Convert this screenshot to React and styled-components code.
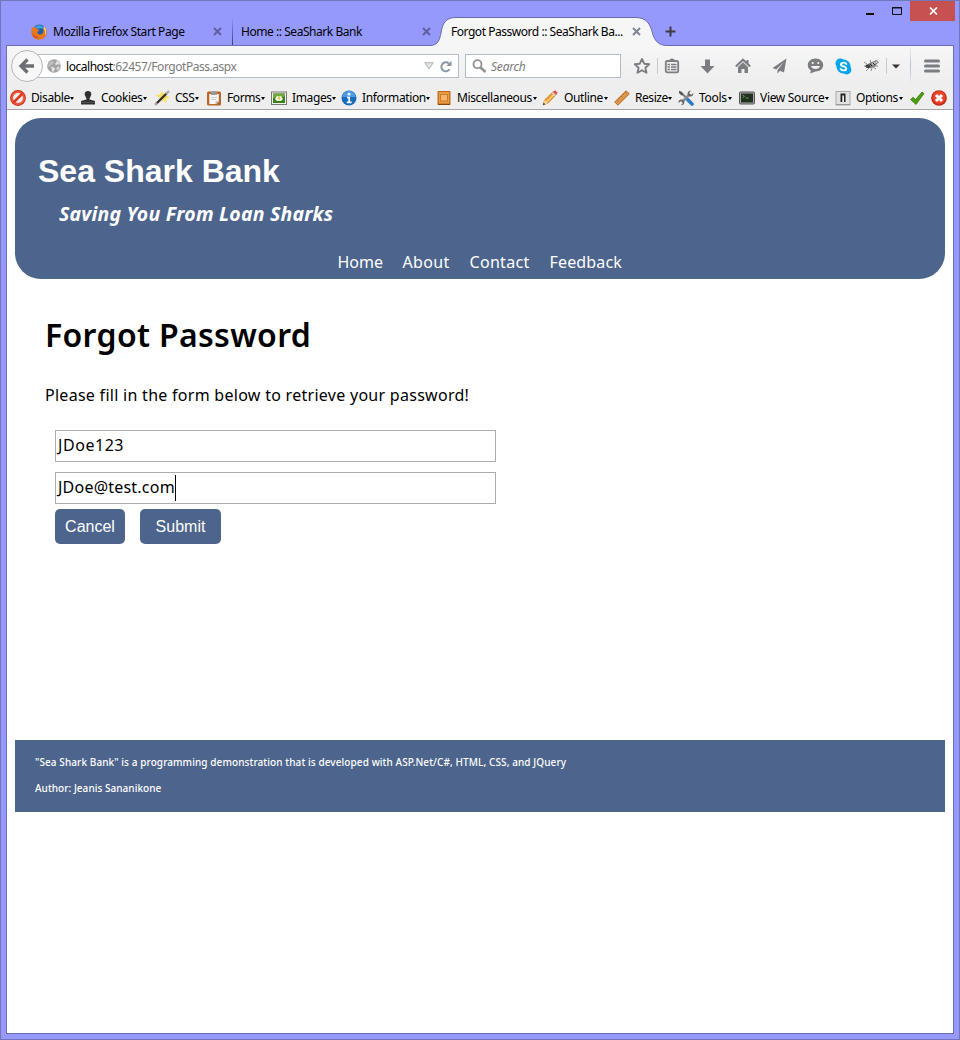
import React from 'react';
import styled, { createGlobalStyle } from 'styled-components';

const Global = createGlobalStyle`
  * { box-sizing: border-box; }
  body { margin: 0; font-family: 'Noto Sans', 'Liberation Sans', sans-serif; color: #000; }
  svg { display: block; flex: none; }
`;

const Window = styled.div`
  width: 960px; height: 1040px; display: flex; flex-direction: column;
  background: #9599fc; border: 1px solid #7376b9; overflow: hidden;
`;
const TopStrip = styled.div`
  height: 44px; flex: none; display: flex; align-items: flex-start;
`;
const Tabs = styled.div`
  display: flex; height: 29px; margin-top: 16px; padding-left: 21px;
`;
const Tab = styled.div`
  position: relative; display: flex; align-items: center; width: ${p => p.$w}px; height: 29px;
  padding: 0 ${p => p.$right || 10}px 0 ${p => p.$left}px;
  font-size: 12px; letter-spacing: ${p => p.$ls || 0}px; white-space: nowrap;
`;
const TabShape = styled.svg`
  position: absolute; left: -11px; top: 0; z-index: 1;
`;
const TabLabel = styled.span`
  position: relative; z-index: 2; flex: 1; line-height: 29px; padding-left: ${p => p.$gap || 0}px;
`;
const TabClose = styled.span`
  position: relative; z-index: 2; width: 9px;
`;
const TabDivider = styled.div`
  width: 1px; height: 28px; background: linear-gradient(#9599fc, #3c3e70);
`;
const NewTab = styled.div`
  width: 40px; height: 29px; display: flex; align-items: center; padding-left: 12px;
`;
const Controls = styled.div`
  margin-left: auto; display: flex; height: 20px; padding-right: 4px;
`;
const Control = styled.div`
  width: ${p => p.$w}px; height: 20px; display: flex; align-items: center; justify-content: center;
  background: ${p => p.$bg || 'transparent'}; padding-left: 1px;
`;
const Frame = styled.div`
  flex: 1; margin: 0 5px 5px; border: 1px solid #6a6db5; display: flex; flex-direction: column; background: #fff;
`;
const Chrome = styled.div`
  height: 64px; flex: none; background: linear-gradient(#f6f6f6, #eeeeee 60%);
  border-bottom: 1px solid #a5a5a5;
`;
const NavBar = styled.div`
  height: 40px; display: flex; align-items: center; padding-left: 4px;
`;
const BackButton = styled.div`
  width: 32px; height: 32px; border: 1px solid #b3b7bb; border-radius: 50%; background: #f7f7f7;
  display: flex; align-items: center; justify-content: center; z-index: 1;
`;
const Field = styled.div`
  height: 24px; width: ${p => p.$w}px; border: 1px solid #b2bdc9; background: #fff;
  display: flex; align-items: center; font-size: 12px; color: #7b7b7b; white-space: nowrap;
`;
const UrlField = styled(Field)`
  margin-left: -5px; padding-left: 9px; border-left: 0;
`;
const UrlText = styled.span`
  margin-left: 5px; flex: 1; letter-spacing: -0.46px;
  b { font-weight: 400; color: #000; }
`;
const SearchField = styled(Field)`
  margin-left: 6px; padding-left: 6px; font-style: italic; margin-right: 9px;
`;
const SearchText = styled.span`
  margin-left: 4px; letter-spacing: -0.2px;
`;
const Slot = styled.div`
  width: ${p => p.$w || 24}px; margin-left: ${p => p.$ml || 0}px; display: flex; justify-content: center; align-items: center;
`;
const Divider = styled.div`
  width: 1px; height: ${p => p.$h}px; margin-left: ${p => p.$ml}px;
  background: ${p => p.$bg || '#c9cacc'};
`;
const DevBar = styled.div`
  height: 23px; display: flex; align-items: center; padding: 1px 0 0 3px; font-size: 12px;
`;
const DevItem = styled.div`
  display: flex; align-items: center; width: ${p => p.$w}px; height: 22px; flex: none;
`;
const DevLabel = styled.div`
  display: flex; align-items: center; width: ${p => p.$w}px; margin-left: ${p => p.$ml}px;
  letter-spacing: ${p => p.$ls}px; line-height: 20px; white-space: nowrap;
`;
const Caret = styled.i`
  margin-left: auto; border: 2.5px solid transparent; border-top: 3px solid #000; border-bottom: 0;
`;
const Page = styled.div`
  flex: 1; padding: 8px; background: #fff; display: flex; flex-direction: column;
`;
const Banner = styled.header`
  height: 161px; border-radius: 26px; background: #4d658d; color: #fff; padding: 35px 23px 0; flex: none;
`;
const BankName = styled.h1`
  margin: 0; font: bold 32px/36px 'Liberation Sans', sans-serif;
`;
const Tagline = styled.h2`
  margin: 12px 0 0 21px; font-size: 19.5px; line-height: 26px; font-weight: 700; font-style: italic; letter-spacing: 0.2px;
`;
const Menu = styled.nav`
  display: flex; justify-content: center; gap: 20px; margin-top: 23px; font-size: 16px; line-height: 24px;
`;
const MenuLink = styled.a`
  width: ${p => p.$w}px; letter-spacing: ${p => p.$ls}px; white-space: nowrap;
`;
const Main = styled.main`
  height: 461px; padding: 32px 30px 0; flex: none;
`;
const Heading = styled.h1`
  margin: 0; font-size: 32px; line-height: 48px; font-weight: 600; letter-spacing: 0.33px;
`;
const Intro = styled.p`
  margin: 24px 0 23px; font-size: 16px; line-height: 24px; letter-spacing: 0.28px;
`;
const Form = styled.div`
  padding-left: 10px; display: flex; flex-direction: column;
`;
const Input = styled.div`
  width: 441px; height: 32px; border: 1px solid #acacac; margin-bottom: ${p => p.$mb}px;
  padding: 0 0 2px 2px; display: flex; align-items: center; font-size: 16px; letter-spacing: ${p => p.$ls}px;
`;
const TextCursor = styled.i`
  width: 1px; height: 26px; background: #000; position: relative; top: 1px;
`;
const Buttons = styled.div`
  display: flex; gap: 15px;
`;
const Button = styled.button`
  width: ${p => p.$w}px; height: 35px; border: 0; border-radius: 5px; background: #4d658d; color: #fff;
  padding: 0; font: 16px 'Liberation Sans', sans-serif;
`;
const Footer = styled.footer`
  height: 72px; background: #4d658d; color: #fff; padding: 15px 20px; font-size: 10px; line-height: 14px; flex: none; font-weight: 500;
`;
const FootLine = styled.p`
  margin: 0 0 12px; letter-spacing: ${p => p.$ls}px;
`;

const Cross = ({ color, size = 9 }) => (
  <svg width={size} height={size} viewBox="0 0 9 9"><path d="M1 1l7 7M8 1L1 8" stroke={color} strokeWidth="2" /></svg>
);
const Firefox = () => (
  <svg width="16" height="16" viewBox="0 0 16 16">
    <circle cx="8.3" cy="7.6" r="7" fill="#1d5fae" />
    <path d="M4 3C6 .5 11 .5 13 3.500C12 5 10 5 9.500 4C8 5 6 5 4 3z" fill="#3da1de" />
    <path d="M1 3.500C1.500 4 2 3.500 2.600 3C4 3.200 5.500 4 7 5.500L8.500 6.500L6.500 7.800C6 10 8 11 10 10.300C12.500 9.500 13 7 12 5C13.500 5.500 13.500 3.500 12.800 2.300C15 4 16 7 15.500 9.500C15 13 12 15.700 8 15.700C4 15.700.5 12.500.3 8.500C.2 6.500.5 5 1 3.500z" fill="#e8761b" />
    <path d="M13 2.500C15.500 4.500 15.800 8.500 14 11.500C14 8 14 6 12.500 4.500z" fill="#ffd24a" />
    <path d="M1 9C2.500 12 5 13 8 13C5 15 1.500 13 1 9z" fill="#d3371c" />
  </svg>
);
const Back = () => (
  <svg width="18" height="18" viewBox="0 0 18 18"><path d="M9.500 2.500L3 9l6.500 6.500M3.500 9H16" stroke="#6b6e72" strokeWidth="3.300" fill="none" /></svg>
);
const Globe = () => (
  <svg width="14" height="14" viewBox="0 0 14 14">
    <circle cx="7" cy="7" r="6.800" fill="#a3a3a3" />
    <path d="M1.500 4.500L3.500 2L5.500 1.200L6 3L7.500 3.800L6 5L4.500 5.500L3 7.500L1 8z" fill="#bdbdbd" />
    <path d="M9.500 1.200L12 3L13 5.500L10.500 5.200L9 6.300L8 4.800L9.500 3.500zM4 7.800L6.500 8.300L8 9.700L6.500 12.800L5 12.500L4.800 10z" fill="#e6e6e6" />
    <path d="M10 8L12.500 7.500L12.200 10L10.500 11.500L9.500 10z" fill="#dadada" />
  </svg>
);
const DropMark = () => (
  <svg width="10" height="8" viewBox="0 0 10 8"><path d="M.8.7h8.400L5 7z" fill="#dfe3e7" stroke="#b1b6bb" /></svg>
);
const Reload = () => (
  <svg width="12" height="13" viewBox="0 0 12 13"><path d="M9.600 9.300A4.500 4.500 0 1 1 8.800 3.400" fill="none" stroke="#8b98a3" strokeWidth="2" /><path d="M11.500.8V6H6.300z" fill="#8b98a3" /></svg>
);
const Magnifier = () => (
  <svg width="15" height="14" viewBox="0 0 15 14"><circle cx="5.500" cy="5.200" r="4" fill="none" stroke="#929292" strokeWidth="1.800" /><path d="M8.300 8.200L13.500 13" stroke="#929292" strokeWidth="2.600" /></svg>
);
const Star = () => (
  <svg width="18" height="18" viewBox="0 0 18 18"><path d="M9 2l2.200 4.700 5 .5-3.800 3.500 1.100 5.100L9 13.200l-4.500 2.600 1.100-5.100L1.800 7.200l5-.5z" fill="none" stroke="#7a7d82" strokeWidth="1.900" strokeLinejoin="round" /></svg>
);
const Clipboard = () => (
  <svg width="16" height="16" viewBox="0 0 16 16"><path d="M5 2L8 .3 11 2v2H5z" fill="#7a7d82" /><rect x="1.800" y="3" width="12.400" height="11.400" rx="1.500" fill="none" stroke="#7a7d82" strokeWidth="1.800" /><path d="M3.500 6.500H6M7 6.500h5.500M3.500 9H6M7 9h5.500M3.500 11.500H6M7 11.500h5.500" stroke="#7a7d82" strokeWidth="1.400" /></svg>
);
const Download = () => (
  <svg width="15" height="15" viewBox="0 0 15 15"><path d="M5 .5h5V7h4.500l-7 7.500L.5 7H5z" fill="#7a7d82" /></svg>
);
const Home = () => (
  <svg width="16" height="16" viewBox="0 0 16 16"><path d="M.8 8.500L8 1.700l7.200 6.800M12.500 2v4" fill="none" stroke="#7a7d82" strokeWidth="2" /><path d="M3 9l5-4.700L13 9v6H9.500v-4h-3v4H3z" fill="#7a7d82" /></svg>
);
const Plane = () => (
  <svg width="15" height="16" viewBox="0 0 15 16"><path d="M14.500.5L.5 10l3.700 1.500L12 4 5.500 12v3.500L8 12.800l4 1.700z" fill="#7a7d82" /></svg>
);
const Chat = () => (
  <svg width="17" height="16" viewBox="0 0 17 16"><path d="M8.500.5c4.500 0 7.700 2.900 7.700 6.600s-3.200 6.500-7.700 6.500L3 15.500l1-3C2 11.300.8 9.500.8 7.100.8 3.400 4 .5 8.500.5z" fill="#7a7d82" /><circle cx="5.700" cy="5" r="1.100" fill="#f3f3f3" /><circle cx="11.300" cy="5" r="1.100" fill="#f3f3f3" /><path d="M4 7.900h9c-.5 2-2.200 3-4.500 3S4.500 9.900 4 7.900z" fill="#f3f3f3" /></svg>
);
const Skype = () => (
  <svg width="17" height="17" viewBox="0 0 17 17"><circle cx="5.200" cy="5.200" r="4.700" fill="#00a5ea" /><circle cx="11.700" cy="11.700" r="4.700" fill="#00a5ea" /><circle cx="8.500" cy="8.500" r="7" fill="#00a5ea" /><path d="M11.300 6C10.600 4.200 6.200 4 6 6.500c-.2 2.400 5.200 1.300 5.200 3.900C11.200 13 6.500 12.900 5.600 10.800" fill="none" stroke="#fff" strokeWidth="1.900" strokeLinecap="round" /></svg>
);
const Bug = () => (
  <svg width="17" height="14" viewBox="0 0 17 14">
    <path d="M1 3l3 2M1 7l3 0M3 12l3-3M8 12l1-3M13 10l-3-2M15 7l-4 0M7 1l1 3M13 1l-3 3" stroke="#777" strokeWidth=".8" />
    <ellipse cx="9" cy="5.800" rx="4.800" ry="2.800" transform="rotate(-22 9 5.800)" fill="#888" />
    <ellipse cx="5" cy="7.300" rx="2.500" ry="2" fill="#444" /><path d="M8 4l6-2.500 1.500 2L9 7z" fill="#bbb" stroke="#666" strokeWidth=".6" /><path d="M7 5l2 2M10 4l2 2" stroke="#333" />
  </svg>
);
const MenuBars = () => (
  <svg width="16" height="14" viewBox="0 0 16 14"><path d="M1.500 2h13M1.500 7h13M1.500 12h13" stroke="#7a7d82" strokeWidth="3" strokeLinecap="round" /></svg>
);

const glyphs = {
  disable: <><circle cx="8" cy="8" r="7.900" fill="#c92a12" /><circle cx="8" cy="8" r="6" fill="none" stroke="#f0583b" strokeWidth="2" /><circle cx="8" cy="8" r="5" fill="#eee" /><path d="M3.500 12.500l9-9" stroke="#dd3c22" strokeWidth="2.600" /></>,
  cookies: <><path d="M8 1c2.200 0 3.500 1.500 3.300 3.400C11 6.500 9.500 7 9.500 9.500L15 11v3.500H1V11l5.500-1.500C6.500 7 5 6.500 4.700 4.400 4.500 2.500 5.800 1 8 1z" fill="#303030" /><path d="M1 12.500h14" stroke="#555" /></>,
  css: <><path d="M8 1l1.500 3L13 1.500 12 5l3.500 2.500L12 9l1 4-4-2.500L5 12l1-4-4.500-3L6 4.500z" fill="#f9df5c" /><path d="M1.500 14.500L13 3" stroke="#2f2f2f" strokeWidth="2.300" /><path d="M12 4l3-3M1 15l2-2" stroke="#aaa" strokeWidth="2.400" /></>,
  forms: <><rect x="1" y="1.500" width="14" height="14" rx="1.500" fill="#b7672a" /><path d="M3.300 4h9.500v7.500L10 14H3.300z" fill="#f6f6f6" /><path d="M12.800 11L9.500 14.200v-3z" fill="#bbb" /><path d="M5 5V2.500L7 1h2l2 1.500V5z" fill="#999" /><path d="M5 7.500h6M5 9.500h5" stroke="#ccc" /></>,
  images: <><rect x=".5" y="2" width="15" height="12.500" fill="#f5f5f0" stroke="#777" /><rect x="2" y="3.500" width="12" height="9.500" fill="#39811d" /><path d="M2 3.500h12v3L2 8z" fill="#73a944" /><path d="M4 9l2-3 2 .6 2-.6 2 3-2 2H6z" fill="#f7f7e7" /><circle cx="8" cy="8.300" r="1.300" fill="#e4c632" /></>,
  info: <><circle cx="8" cy="8" r="7.500" fill="#186cbd" /><path d="M1.500 7a6.500 6.200 0 0 1 13 0z" fill="#4d9be0" /><circle cx="8" cy="4.200" r="1.400" fill="#fff" /><path d="M6 7.500h2.200v5M5.800 12.300h4.800" fill="none" stroke="#fff" strokeWidth="1.700" /></>,
  misc: <><rect x="1.500" y="1" width="13" height="14" rx="1" fill="#b9681b" /><rect x="2.700" y="2" width="10.600" height="11.500" fill="#e89b42" /><rect x="4.500" y="4.500" width="7" height="6.500" fill="#f3b66a" stroke="#cc7d2b" /><path d="M2 14.500h12" stroke="#874710" /></>,
  outline: <><path d="M1 15l1.500-5L11 1.700l3.300 3L6 13.300z" fill="#ef9b32" stroke="#b96d1a" strokeWidth=".5" /><path d="M4.500 12L12.500 4" stroke="#ffd17c" strokeWidth="1.400" /><path d="M11 1.700L13 .3l2.700 2.500-1.400 1.900z" fill="#d9505b" /><path d="M10 2.700l3.300 3" stroke="#ddd" strokeWidth="1.200" /><path d="M1 15l1.500-5L6 13.300z" fill="#f1d2a0" /><path d="M1 15l.7-2.200 1.600 1.500z" fill="#222" /></>,
  resize: <><path d="M.7 12L12 .8l3.300 3L4 15.200z" fill="#dc964e" stroke="#b66e2b" /><path d="M3 10l1.500 1.500M5 8l1 1M7 6l1.500 1.500M9 4l1 1M11 2l1.500 1.500" stroke="#a5642a" strokeWidth=".7" /></>,
  tools: <><path d="M3 2.500l10 10" stroke="#777" strokeWidth="1.800" /><path d="M1 .8L4 2l1 3-1.500.5L1 3z" fill="#555" /><path d="M12 4L4 12" stroke="#8c8c8c" strokeWidth="2.500" /><path d="M13 .7L11 3l2 2 2.300-2c.3 2.500-1.500 4-4 3.300L9.500 4.500C9.300 2 11 .3 13 .7zM3 15.300L5 13l-2-2-2.300 2C0 10.500 2 9 4.500 9.700l1.800 1.800C6.700 14 5 15.600 3 15.300z" fill="#666" /><path d="M10 10l4 4" stroke="#2d7cc9" strokeWidth="3.600" strokeLinecap="round" /></>,
  source: <><rect x=".5" y="2" width="15" height="12" rx="1" fill="#aaa" stroke="#555" /><rect x="2" y="3.500" width="12" height="9" fill="#243022" /><path d="M3.500 5l2 1.300-2 1.300M6.500 8h3" fill="none" stroke="#69a75a" strokeWidth=".9" /></>,
  options: <><rect x="1" y="1.500" width="14" height="13.500" fill="#e2e2e2" stroke="#aaa" /><path d="M1 14.500h14" stroke="#999" /><rect x="5.500" y="3.500" width="5" height="8.500" fill="#222" /><rect x="7.300" y="5.500" width="1.700" height="6.500" fill="#eee" /></>,
  check: <><path d="M1.500 9.500l2.700-2.300 2.300 2.400L13 2l2 1.500-8 11z" fill="#4d9d0b" stroke="#2d7108" strokeWidth=".7" /></>,
  error: <><circle cx="8" cy="8" r="7.800" fill="#c92913" /><circle cx="8" cy="7.500" r="6.300" fill="#e8452f" /><path d="M5 5l6 6M11 5l-6 6" stroke="#fff" strokeWidth="3" /></>,
};

// Toolbar entries: icon, label, item width, label width, letter spacing, gap
const devItems = [
  ['disable', 'Disable', 70, 43, -0.4, 5],
  ['cookies', 'Cookies', 74, 46, -0.38, 5],
  ['css', 'CSS', 52, 24, -0.5, 5],
  ['forms', 'Forms', 65, 38, -0.4, 5],
  ['images', 'Images', 70, 43, -0.36, 5],
  ['info', 'Information', 95, 67, -0.36, 5],
  ['misc', 'Miscellaneous', 106, 80, -0.38, 5],
  ['outline', 'Outline', 72, 44, -0.36, 6],
  ['resize', 'Resize', 64, 37, -0.45, 5],
  ['tools', 'Tools', 61, 33, -0.3, 5],
  ['source', 'View Source', 96, 69, -0.32, 5],
  ['options', 'Options', 74, 47, -0.4, 5],
  ['check', '', 22, 0, 0, 0],
  ['error', '', 16, 0, 0, 0],
];

export default function App() {
  return (
    <Window>
      <Global />
      <TopStrip>
        <Tabs>
          <Tab $w={210} $left={9} $ls={-0.42}>
            <Firefox />
            <TabLabel $gap={6}>Mozilla Firefox Start Page</TabLabel>
            <TabClose><Cross color="#5d619e" /></TabClose>
          </Tab>
          <TabDivider />
          <Tab $w={208} $left={8} $ls={-0.45}>
            <TabLabel>Home :: SeaShark Bank</TabLabel>
            <TabClose><Cross color="#5d619e" /></TabClose>
          </Tab>
          <Tab $w={212} $left={10} $right={12} $ls={-0.46}>
            <TabShape width="240" height="30" viewBox="0 0 240 30">
              <path d="M0 28.500C8 28.500 9.500 23 11 16C12.500 7 15 .5 26 .5H205C217 .5 220 7 222.500 16C224.500 24 229 28.500 237 28.500V30H0z" fill="#f6f6f6" />
              <path d="M0 28.500C8 28.500 9.500 23 11 16C12.500 7 15 .5 26 .5H205C217 .5 220 7 222.500 16C224.500 24 229 28.500 237 28.500" fill="none" stroke="#686ba9" />
            </TabShape>
            <TabLabel>Forgot Password :: SeaShark Ba...</TabLabel>
            <TabClose><Cross color="#7d8791" /></TabClose>
          </Tab>
          <NewTab>
            <svg width="11" height="11" viewBox="0 0 11 11"><path d="M5.500.5v10M.5 5.500h10" stroke="#3c3c3c" strokeWidth="2" /></svg>
          </NewTab>
        </Tabs>
        <Controls>
          <Control $w={26}><svg width="8" height="14" viewBox="0 0 8 14"><path d="M0 10h8" stroke="#111" strokeWidth="2" /></svg></Control>
          <Control $w={28}><svg width="10" height="8" viewBox="0 0 10 8"><path d="M.5.5h9v7h-9zM0 1h10" stroke="#111" fill="none" /></svg></Control>
          <Control $w={45} $bg="#c75050"><svg width="9" height="8" viewBox="0 0 9 8"><path d="M1 .5l7 7M8 .5l-7 7" stroke="#fff" strokeWidth="1.700" /></svg></Control>
        </Controls>
      </TopStrip>
      <Frame>
        <Chrome>
          <NavBar>
            <BackButton><Back /></BackButton>
            <UrlField $w={421}>
              <Globe />
              <UrlText><b>localhost</b>:62457/ForgotPass.aspx</UrlText>
              <DropMark />
              <Slot $w={24}><Reload /></Slot>
            </UrlField>
            <SearchField $w={156}><Magnifier /><SearchText>Search</SearchText></SearchField>
            <Slot><Star /></Slot>
            <Divider $h={16} $ml={3} />
            <Slot $ml={2}><Clipboard /></Slot>
            <Slot $ml={11}><Download /></Slot>
            <Slot $ml={12}><Home /></Slot>
            <Slot $ml={12}><Plane /></Slot>
            <Slot $ml={12}><Chat /></Slot>
            <Slot $ml={4}><Skype /></Slot>
            <Slot $ml={4}><Bug /></Slot>
            <Divider $h={16} $ml={3} />
            <Slot $ml={3} $w={12}><svg width="8" height="5" viewBox="0 0 8 5"><path d="M0 .5h8L4 4.500z" fill="#333" /></svg></Slot>
            <Divider $h={38} $ml={8} $bg="linear-gradient(#eef1f5, #b4bfcc 50%, #eef1f5)" />
            <Slot $ml={9}><MenuBars /></Slot>
          </NavBar>
          <DevBar>
            {devItems.map(([icon, label, w, lw, ls, gap]) => (
              <DevItem key={icon} $w={w}>
                <svg width="16" height="16" viewBox="0 0 16 16">{glyphs[icon]}</svg>
                {label && <DevLabel $w={lw} $ml={gap} $ls={ls}>{label}<Caret /></DevLabel>}
              </DevItem>
            ))}
          </DevBar>
        </Chrome>
        <Page>
          <Banner>
            <BankName>Sea Shark Bank</BankName>
            <Tagline>Saving You From Loan Sharks</Tagline>
            <Menu>
              <MenuLink $w={45} $ls={0}>Home</MenuLink>
              <MenuLink $w={47} $ls={0.35}>About</MenuLink>
              <MenuLink $w={60} $ls={0.3}>Contact</MenuLink>
              <MenuLink $w={73} $ls={0.15}>Feedback</MenuLink>
            </Menu>
          </Banner>
          <Main>
            <Heading>Forgot Password</Heading>
            <Intro>Please fill in the form below to retrieve your password!</Intro>
            <Form>
              <Input $mb={10} $ls={0.55}>JDoe123</Input>
              <Input $mb={5} $ls={0.22}>JDoe@test.com<TextCursor /></Input>
              <Buttons>
                <Button $w={70}>Cancel</Button>
                <Button $w={81}>Submit</Button>
              </Buttons>
            </Form>
          </Main>
          <Footer>
            <FootLine $ls={0.09}>"Sea Shark Bank" is a programming demonstration that is developed with ASP.Net/C#, HTML, CSS, and JQuery</FootLine>
            <FootLine $ls={0.04}>Author: Jeanis Sananikone</FootLine>
          </Footer>
        </Page>
      </Frame>
    </Window>
  );
}
